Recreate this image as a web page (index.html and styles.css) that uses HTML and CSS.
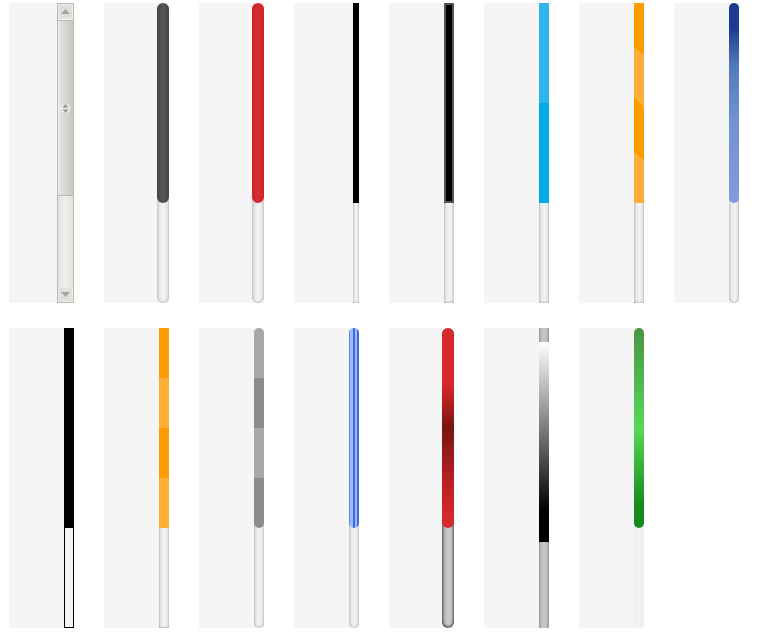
FILE: index.html
```html
<!DOCTYPE html>
<html lang="en">
<head>
  <meta charset="UTF-8">
  <meta name="viewport" content="width=device-width, initial-scale=1.0">
  <title>Scrollbar Skins</title>
  <link rel="stylesheet" href="styles.css">
</head>
<body>
  <div class="grid">
    <!-- row 1 -->
    <div class="cell">
      <div class="classic">
        <div class="classic-btn">
          <svg width="11" height="7" viewBox="0 0 11 7"><path d="M5.5 1 L10 6 L1 6 Z" fill="#a3a59e"/></svg>
        </div>
        <div class="classic-thumb">
          <svg width="11" height="13" viewBox="0 0 11 13">
            <circle cx="5.5" cy="6.5" r="5" fill="#e9eae5"/>
            <path d="M5.5 2 L8.5 5.6 L2.5 5.6 Z M5.5 11 L8.5 7.4 L2.5 7.4 Z" fill="#96988f"/>
          </svg>
        </div>
        <div class="classic-rest"></div>
        <div class="classic-btn">
          <svg width="11" height="7" viewBox="0 0 11 7"><path d="M5.5 6 L10 1 L1 1 Z" fill="#a3a59e"/></svg>
        </div>
      </div>
    </div>
    <div class="cell"><div class="track w12"><div class="thumb dark"></div></div></div>
    <div class="cell"><div class="track w12"><div class="thumb red"></div></div></div>
    <div class="cell"><div class="track w6 square"><div class="thumb black"></div></div></div>
    <div class="cell"><div class="track w10 square"><div class="thumb black-framed"></div></div></div>
    <div class="cell"><div class="track w10 square"><div class="thumb sky"></div></div></div>
    <div class="cell">
      <div class="track w10 square">
        <svg class="thumb" width="10" height="200" viewBox="0 0 10 200">
          <rect width="10" height="200" fill="#ff9c00"/>
          <path d="M0 44 L10 52 L10 104 L0 94 Z M0 149 L10 157 L10 200 L0 200 Z" fill="#ffae38"/>
        </svg>
      </div>
    </div>
    <div class="cell"><div class="track w10"><div class="thumb navy"></div></div></div>

    <!-- row 2 -->
    <div class="cell"><div class="track w10 outlined"><div class="thumb black"></div></div></div>
    <div class="cell"><div class="track w10 square"><div class="thumb orange-bands"></div></div></div>
    <div class="cell"><div class="track w10"><div class="thumb grey-bands"></div></div></div>
    <div class="cell"><div class="track w10"><div class="thumb blue-lines"></div></div></div>
    <div class="cell"><div class="track w12 steel"><div class="thumb red-shade"></div></div></div>
    <div class="cell"><div class="track w10 square steel-flat"><div class="thumb fade"></div></div></div>
    <div class="cell"><div class="track w10 pale"><div class="thumb green"></div></div></div>
  </div>
</body>
</html>
```

FILE: styles.css
```css
body {
  margin: 3px 0 0 9px;
  background: #fff;
}

.grid {
  display: grid;
  grid-template-columns: repeat(8, 65px);
  grid-auto-rows: 300px;
  gap: 25px 30px;
}

.cell {
  display: flex;
  justify-content: flex-end;
  background: #f5f5f5;
}

/* default track */
.track {
  border-radius: 5px;
  background: linear-gradient(to right, #cfcfcf, #e9e9e9 25%, #f3f3f3 55%, #e9e9e9 80%, #d2d2d2);
  box-shadow: inset 0 -1px 2px rgba(0, 0, 0, 0.18);
}
.w6 { width: 6px; }
.w10 { width: 10px; }
.w12 { width: 12px; border-radius: 6px; }
.square { border-radius: 0; }

.thumb {
  display: block;
  height: 200px;
}

.dark {
  border-radius: 6px;
  background: linear-gradient(to right, #444, #565656 50%, #444);
}
.red {
  border-radius: 6px;
  background: linear-gradient(to right, #c92426, #d62e30 50%, #c92426);
}
.black { background: #000; }
.black-framed {
  box-sizing: border-box;
  background: #000;
  border: 2px solid #555;
}
.sky { background: linear-gradient(to bottom, #2fb5ec 50%, #00a9ec 50%); }
.navy {
  border-radius: 5px;
  background: linear-gradient(to bottom, #1c3a90, #1c3a90 12%, #4f7cbb 32%, #7393d4 60%, #7f9bdb);
}
.orange-bands {
  background: linear-gradient(to bottom, #ff9c00 25%, #ffae38 25% 50%, #ff9c00 50% 75%, #ffae38 75%);
}
.grey-bands {
  border-radius: 5px;
  background: linear-gradient(to bottom, #a8a8a8 25%, #8c8c8c 25% 50%, #a8a8a8 50% 75%, #8c8c8c 75%);
}
.blue-lines {
  border-radius: 5px;
  background: linear-gradient(to right, #5d86ea 12%, #9dbaff 12% 45%, #3f6ce2 45% 58%, #9dbaff 58% 78%, #3f6ce2 78%);
}
.red-shade {
  border-radius: 6px;
  background: linear-gradient(to bottom, #d9282a, #d9282a 28%, #7a1510 50%, #c02226 80%, #dc2a2c);
}
.fade {
  background: linear-gradient(to bottom, #fff, #000 84%);
}
.green {
  border-radius: 5px;
  background: linear-gradient(to bottom, #4a9444, #55d85a 50%, #168a1a 90%);
}

/* track variants */
.outlined {
  box-sizing: border-box;
  border-radius: 0;
  background: #f5f5f5;
  box-shadow: inset 0 0 0 1px #000;
}
.steel {
  background: linear-gradient(to right, #6f6f6f, #bcbcbc 25%, #cdcdcd 55%, #bcbcbc 80%, #727272);
  box-shadow: inset 0 -2px 2px rgba(0, 0, 0, 0.45);
}
.steel-flat {
  padding-top: 14px;
  height: 286px;
  background: linear-gradient(to right, #999, #c4c4c4 30%, #c4c4c4 70%, #999);
  box-shadow: none;
}
.pale {
  background: linear-gradient(to right, #ededed, #f3f3f3 50%, #ededed);
  box-shadow: none;
}

/* first cell, the plain desktop scrollbar */
.classic {
  box-sizing: border-box;
  width: 17px;
  display: flex;
  flex-direction: column;
  border: 1px solid #b9bab3;
  background: #ecede8;
}
.classic-btn {
  height: 15px;
  display: flex;
  align-items: center;
  justify-content: center;
  background: #dfe0da;
  box-shadow: inset 0 0 0 1px #ebece7;
}
.classic-thumb {
  height: 176px;
  margin-top: 1px;
  display: flex;
  align-items: center;
  justify-content: center;
  border-top: 1px solid #b9bab3;
  border-bottom: 1px solid #b9bab3;
  box-sizing: border-box;
  background: linear-gradient(to right, #e6e7e1, #c6c7c0);
  box-shadow: inset 1px 0 #f2f3ee;
}
.classic-rest {
  flex: 1;
  background: linear-gradient(to right, #e2e3dd, #eeefea 50%, #e2e3dd);
}
```
